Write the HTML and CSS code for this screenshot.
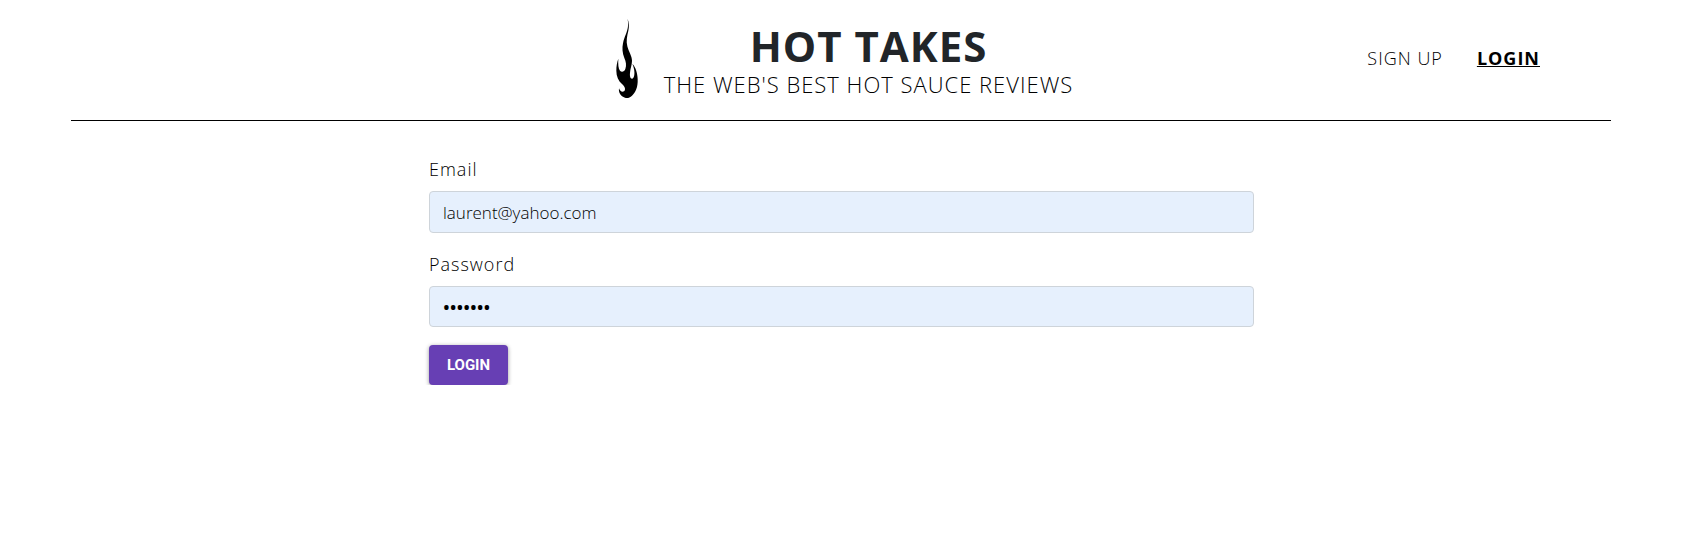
FILE: index.html
```html
<!DOCTYPE html>
<html lang="en">
<head>
<meta charset="utf-8">
<meta name="viewport" content="width=device-width, initial-scale=1">
<title>Hot Takes</title>
<link rel="stylesheet" href="styles.css">
</head>
<body>
<header class="header">
  <div class="brand">
    <svg class="flame" viewBox="40 20 72 246" aria-hidden="true">
      <path d="M77 24C82 36 83 48 80 61C76 78 73 92 77 108C82 127 91 137 91 151C91 163 86 174 85 188C84 197 86 205 91 205C98 205 100 190 97 176C96 170 94 165 92 160C103 172 107 188 108 206C109 230 102 246 91 256C84 262 77 265 70 262C57 258 50 247 52 234C55 242 61 247 67 243C73 238 70 229 61 221C50 211 44 198 44 181C44 167 46 156 50 145C49 161 50 174 55 181C60 187 68 184 71 176C75 165 73 154 68 143C62 128 61 113 64 99C68 78 78 64 79 47C80 39 79 31 77 24Z"/>
    </svg>
    <div class="brand-text">
      <h1 class="title">HOT TAKES</h1>
      <p class="tagline">THE WEB'S BEST HOT SAUCE REVIEWS</p>
    </div>
  </div>
  <nav class="nav">
    <a class="nav-link" href="#signup">SIGN UP</a>
    <a class="nav-link active" href="#login">LOGIN</a>
  </nav>
</header>
<main class="main">
  <form class="form">
    <div class="field">
      <label class="label" for="email">Email</label>
      <input class="input" id="email" type="email" value="laurent@yahoo.com">
    </div>
    <div class="field">
      <label class="label" for="password">Password</label>
      <input class="input password" id="password" type="password" value="chilies">
    </div>
    <button class="button" type="button">LOGIN</button>
  </form>
</main>
</body>
</html>
```
FILE: styles.css
```css
* {
  box-sizing: border-box;
}

body {
  margin: 0;
  background: #fff;
  color: #212529;
  font-family: "Open Sans", "Noto Sans", sans-serif;
  font-size: 18px;
  font-weight: 300;
}

.header {
  display: grid;
  grid-template-columns: 1fr auto 1fr;
  align-items: center;
  margin: 0 74px 0 71px;
  padding: 16px 0 20px;
  border-bottom: 1px solid #000;
}

.brand {
  grid-column: 2;
  display: flex;
  align-items: center;
  gap: 25px;
  padding-left: 6px;
}

.flame {
  width: 24px;
  height: 84px;
}

.brand-text {
  padding-top: 4px;
  text-align: center;
}

.title,
.tagline {
  margin: 0;
}

.title {
  font-size: 42px;
  font-weight: 700;
  line-height: 48px;
  letter-spacing: 1px;
}

.tagline {
  color: #000;
  font-size: 22px;
  line-height: 28px;
  letter-spacing: 1px;
}

.nav {
  display: flex;
  justify-content: flex-end;
  gap: 34px;
  padding-right: 71px;
}

.nav-link {
  color: #000;
  letter-spacing: 1px;
  line-height: 28px;
  text-decoration: none;
}

.active {
  font-weight: 700;
  text-decoration: underline;
}

.main {
  padding: 35px 431px 0 429px;
}

.form {
  display: flex;
  flex-direction: column;
  align-items: flex-start;
  gap: 18px;
}

.field {
  width: 100%;
}

.label {
  display: block;
  margin-bottom: 8px;
  color: #000;
  line-height: 27px;
  letter-spacing: 1px;
}

.input {
  display: block;
  width: 100%;
  height: 42px;
  padding: 6px 13px;
  border: 1px solid #ced4da;
  border-radius: 4px;
  background: #e6f0fd;
  color: #000;
  font: inherit;
  font-size: 17px;
}

.password {
  height: 41px;
  font-size: 18px;
  font-weight: 600;
}

.button {
  min-width: 79px;
  padding: 0 17px;
  border: 0;
  border-radius: 4px;
  background: #673fb4;
  box-shadow: 0 1px 4px rgba(0, 0, 0, 0.4);
  color: #fff;
  font: 700 15px/40px Roboto, sans-serif;
}
```
